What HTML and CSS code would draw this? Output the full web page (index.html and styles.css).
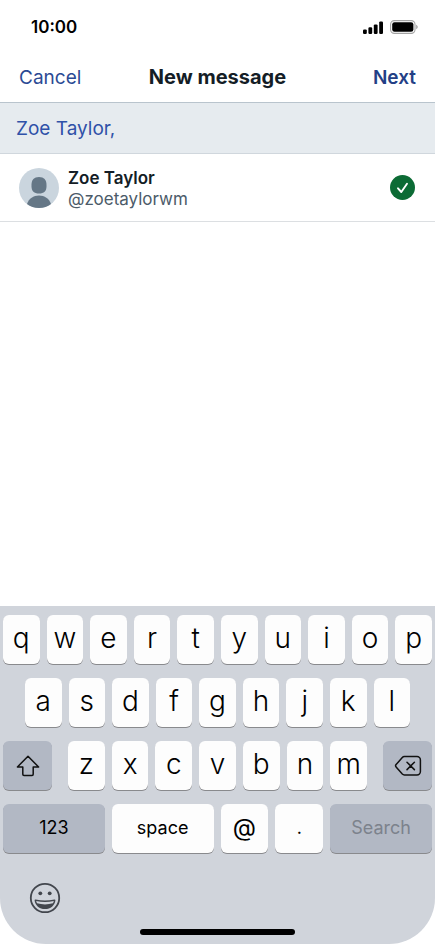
FILE: index.html
```html
<!DOCTYPE html>
<html lang="en">
<head>
  <meta charset="UTF-8">
  <meta name="viewport" content="width=device-width, initial-scale=1">
  <title>New message</title>
  <link rel="stylesheet" href="styles.css">
</head>
<body>
  <div class="screen">
    <div class="status-bar">
      <span class="time">10:00</span>
      <div class="status-icons">
        <svg width="20" height="13" viewBox="0 0 20 13" aria-hidden="true">
          <rect x="0" y="8.400" width="3.800" height="4.600" rx="1.200"/>
          <rect x="5.400" y="6.200" width="3.800" height="6.800" rx="1.200"/>
          <rect x="10.800" y="3.400" width="3.800" height="9.600" rx="1.200"/>
          <rect x="16.200" y="0.400" width="3.800" height="12.600" rx="1.200"/>
        </svg>
        <svg width="28" height="14" viewBox="0 0 28 14" aria-hidden="true">
          <rect x="0.6" y="0.6" width="24.4" height="12.8" rx="3.8" fill="none" stroke="#a3a3a3" stroke-width="1.1"/>
          <rect x="2.2" y="2.2" width="21.2" height="9.6" rx="2.3"/>
          <path d="M26.2 4.8v4.4c.9-.4 1.5-1.200 1.500-2.200s-.6-1.800-1.500-2.200z" fill="#a3a3a3"/>
        </svg>
      </div>
    </div>

    <header class="nav-bar">
      <button class="nav-btn" type="button">Cancel</button>
      <h1>New message</h1>
      <button class="nav-btn next" type="button">Next</button>
    </header>

    <main>
      <input class="recipients" type="text" value="Zoe Taylor," aria-label="Recipients">

      <label class="person">
        <svg class="avatar" width="40" height="40" viewBox="0 0 40 40" aria-hidden="true">
          <circle cx="20" cy="20" r="20" fill="#cad5de"/>
          <path d="M20 9c5 0 7.500 3 7.500 7.500v2c0 4.500-2.500 7-7.500 7s-7.500-2.500-7.500-7v-2C12.500 12 15 9 20 9z" fill="#657786"/>
          <path d="M8 36c2-5.400 6.400-8.400 12-8.400S30 30.600 32 36c-3.300 2.600-7.400 4-12 4s-8.700-1.400-12-4z" fill="#657786"/>
        </svg>
        <span class="person-text">
          <span class="name">Zoe Taylor</span>
          <span class="handle">@zoetaylorwm</span>
        </span>
        <span class="check">
          <input type="checkbox" checked>
          <svg width="25" height="25" viewBox="0 0 25 25" aria-hidden="true">
            <path d="M8 13.300l3.300 3.700L17 8.800" fill="none" stroke="#fff" stroke-width="1.900" stroke-linecap="round" stroke-linejoin="round"/>
          </svg>
        </span>
      </label>
    </main>

    <div class="keyboard">
      <div class="key-row">
        <button class="key">q</button>
        <button class="key">w</button>
        <button class="key">e</button>
        <button class="key">r</button>
        <button class="key">t</button>
        <button class="key">y</button>
        <button class="key">u</button>
        <button class="key">i</button>
        <button class="key">o</button>
        <button class="key">p</button>
      </div>
      <div class="key-row middle">
        <button class="key">a</button>
        <button class="key">s</button>
        <button class="key">d</button>
        <button class="key">f</button>
        <button class="key">g</button>
        <button class="key">h</button>
        <button class="key">j</button>
        <button class="key">k</button>
        <button class="key">l</button>
      </div>
      <div class="key-row spread">
        <button class="key dark" aria-label="Shift">
          <svg width="24" height="22" viewBox="0 0 24 22" aria-hidden="true">
            <path d="M12 1.200L22.600 12H17.200v7.200c0 .8-.4 1.200-1.200 1.200H8c-.8 0-1.200-.4-1.200-1.200V12H1.400z" fill="none" stroke="#111" stroke-width="1.500" stroke-linejoin="round"/>
          </svg>
        </button>
        <div class="letters">
          <button class="key">z</button>
          <button class="key">x</button>
          <button class="key">c</button>
          <button class="key">v</button>
          <button class="key">b</button>
          <button class="key">n</button>
          <button class="key">m</button>
        </div>
        <button class="key dark" aria-label="Delete">
          <svg width="28" height="22" viewBox="0 0 28 22" aria-hidden="true">
            <g fill="none" stroke="#111" stroke-width="1.500" stroke-linecap="round" stroke-linejoin="round">
              <path d="M10.400 1.600H23a3.400 3.400 0 0 1 3.400 3.400v11.600A3.400 3.400 0 0 1 23 20H10.400a3 3 0 0 1-2.100-.9l-6.200-7.100a1.800 1.800 0 0 1 0-2.400l6.200-7.100a3 3 0 0 1 2.100-.9z"/>
              <path d="M13 7.200l7.400 7.400M20.400 7.200L13 14.600"/>
            </g>
          </svg>
        </button>
      </div>
      <div class="key-row bottom">
        <button class="key dark">123</button>
        <button class="key">space</button>
        <button class="key symbol">@</button>
        <button class="key">.</button>
        <button class="key dark" disabled>Search</button>
      </div>
      <div class="keyboard-footer">
        <button class="emoji-btn" aria-label="Emoji">
          <svg width="32" height="32" viewBox="0 0 32 32" aria-hidden="true">
            <circle cx="16" cy="16" r="14.200" fill="none" stroke="#42464d" stroke-width="1.800"/>
            <circle cx="11.300" cy="11.300" r="1.900" fill="#42464d"/>
            <circle cx="20.700" cy="11.300" r="1.900" fill="#42464d"/>
            <path d="M6.600 17.400c6.200 1.500 12.600 1.500 18.800 0 .7-.1 1.100.2 1 .9-.5 5.300-4.800 8.800-10.400 8.800S6.100 23.600 5.600 18.300c-.1-.7.300-1 1-.9z" fill="#42464d"/>
            <path d="M7.200 18.900c5.800 1.400 11.800 1.400 17.600 0-.2.900-.5 1.700-.9 2.400-4.900 1.500-10.900 1.500-15.800 0-.4-.7-.7-1.500-.9-2.400z" fill="#d0d4db"/>
          </svg>
        </button>
      </div>
      <div class="home-bar"></div>
    </div>
  </div>
</body>
</html>
```

FILE: styles.css
```css
* {
  box-sizing: border-box;
}

body {
  margin: 0;
  font-family: Inter, "Liberation Sans", sans-serif;
  background: #fff;
  color: #141d26;
}

button {
  font-family: inherit;
  border: none;
  padding: 0;
  background: none;
  cursor: pointer;
}

.screen {
  display: flex;
  flex-direction: column;
  min-height: 100vh;
}

/* status bar */
.status-bar {
  display: flex;
  align-items: center;
  justify-content: space-between;
  height: 52px;
  padding: 2px 17px 0 31px;
}

.time {
  font-size: 17px;
  font-weight: 600;
  color: #000;
}

.status-icons {
  display: flex;
  align-items: center;
  gap: 7px;
}

/* header */
.nav-bar {
  display: grid;
  grid-template-columns: 1fr auto 1fr;
  align-items: center;
  height: 51px;
  padding: 0 19px;
  border-bottom: 1px solid #b9c4cd;
}

.nav-bar h1 {
  margin: 0;
  font-size: 20px;
  font-weight: 700;
}

.nav-btn {
  justify-self: start;
  font-size: 19px;
  color: #2b4a94;
}

.next {
  justify-self: end;
  font-weight: 600;
  color: #233f86;
}

main {
  flex: 1;
}

.recipients {
  display: block;
  width: 100%;
  height: 51px;
  padding: 0 16px;
  border: none;
  border-bottom: 1px solid #d0d7dd;
  border-radius: 0;
  outline: none;
  background: #e6ebef;
  color: #2f51a8;
  font-family: inherit;
  font-size: 19px;
}

.person {
  display: flex;
  align-items: center;
  gap: 9px;
  height: 68px;
  padding: 0 20px 0 19px;
  border-bottom: 1px solid #dcdfe2;
}

.person-text {
  display: flex;
  flex: 1;
  flex-direction: column;
  padding-top: 2px;
  font-size: 17px;
  line-height: 21px;
}

.name {
  font-weight: 600;
}

.handle {
  color: #4c5b69;
}

.check {
  display: grid;
}

.check input,
.check svg {
  grid-area: 1 / 1;
}

.check input {
  appearance: none;
  width: 25px;
  height: 25px;
  margin: 0;
  border-radius: 50%;
  background: #d0d7dd;
}

.check input:checked {
  background: #0c6b35;
}

.check svg {
  z-index: 1;
  pointer-events: none;
}

/* keyboard */
.keyboard {
  display: flex;
  flex-direction: column;
  gap: 14px;
  padding: 9px 3px;
  border-radius: 0 0 46px 46px;
  background: #d0d4db;
}

.key-row,
.letters {
  display: flex;
  gap: 7px;
}

.middle {
  padding: 0 22px;
}

.spread {
  gap: 16px;
}

.letters {
  flex: 1;
}

.key {
  flex: 1;
  height: 49px;
  border-radius: 6px;
  background: #fdfdfd;
  box-shadow: 0 1px 0 #898a8d;
  color: #000;
  font-size: 28px;
  font-weight: 300;
  line-height: 32px;
  padding-bottom: 4px;
}

.dark {
  background: #b2b8c4;
}

.spread .dark {
  display: flex;
  flex: 0 0 49px;
  align-items: center;
  justify-content: center;
  padding: 0;
}

.bottom .key {
  flex: 48;
  padding: 0 0 2px;
  font-size: 18px;
  font-weight: 400;
}

.bottom .key:first-child,
.bottom .key:nth-child(2),
.bottom .key:last-child {
  flex: 102;
}

.bottom .symbol {
  font-size: 24px;
}

.key:disabled {
  color: #7c828c;
}

.keyboard-footer {
  display: flex;
  height: 48px;
  padding: 15px 26px 0;
}

.emoji-btn {
  height: 32px;
}

.home-bar {
  align-self: center;
  width: 36%;
  height: 6px;
  border-radius: 3px;
  background: #000;
}
```
